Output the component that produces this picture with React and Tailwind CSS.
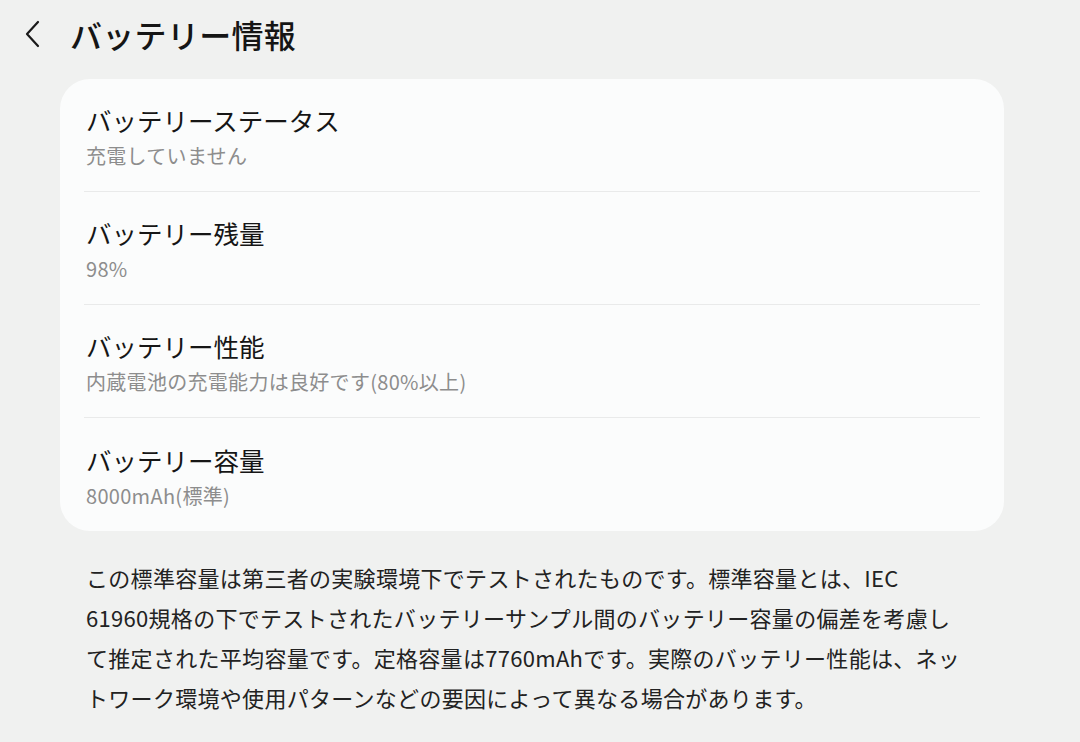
import React from "react";

const rows = [
  { t: "バッテリーステータス", s: "充電していません" },
  { t: "バッテリー残量", s: "98%" },
  { t: "バッテリー性能", s: "内蔵電池の充電能力は良好です(80%以上)" },
  { t: "バッテリー容量", s: "8000mAh(標準)" },
];

const lines = [
  "この標準容量は第三者の実験環境下でテストされたものです。標準容量とは、IEC",
  "61960規格の下でテストされたバッテリーサンプル間のバッテリー容量の偏差を考慮し",
  "て推定された平均容量です。定格容量は7760mAhです。実際のバッテリー性能は、ネッ",
  "トワーク環境や使用パターンなどの要因によって異なる場合があります。",
];

export default function App() {
  return (
    <div
      className="w-[1080px] h-[742px] overflow-hidden bg-[#f0f1f0] text-[#151515]"
      style={{ fontFamily: '"Noto Sans CJK JP", "Noto Sans", sans-serif' }}
    >
      <div className="h-[79px] flex items-start pt-[13px]">
        <div className="w-[70px] h-[42px] flex items-center pl-[22px]">
          <svg width="22" height="28" viewBox="0 0 22 28" fill="none">
            <polyline points="16,2 5,14 16,26" stroke="#1a1a1a" strokeWidth="2.2" strokeLinecap="round" strokeLinejoin="round" />
          </svg>
        </div>
        <div className="text-[32px] leading-[42px] font-medium tracking-[0.3px]">バッテリー情報</div>
      </div>

      <div className="ml-[60px] w-[944px] bg-[#fbfcfc] rounded-[30px] px-[24px]">
        {rows.map((r, i) => (
          <div
            key={i}
            className={`h-[113px] flex flex-col justify-center pl-[2px] pt-[6px] ${i < rows.length - 1 ? "border-b border-[#e9eaea]" : ""}`}
          >
            <div className="text-[25.5px] leading-[36px] text-[#161616]">{r.t}</div>
            <div className="text-[20px] leading-[36px] tracking-[0.3px] text-[#8d8d8d]">{r.s}</div>
          </div>
        ))}
      </div>

      <div className="ml-[86px] mt-[26px] text-[22px] leading-[40px] tracking-[0.3px] text-[#222222]">
        {lines.map((l, i) => (
          <div key={i} className="whitespace-nowrap">{l}</div>
        ))}
      </div>
    </div>
  );
}
